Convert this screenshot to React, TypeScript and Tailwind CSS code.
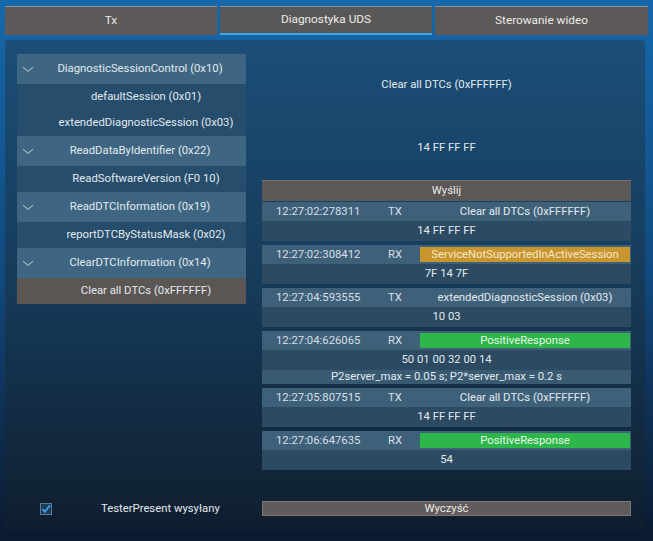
import React from "react";

const groups: { h: string; items: string[]; sel?: number }[] = [
  { h: "DiagnosticSessionControl (0x10)", items: ["defaultSession (0x01)", "extendedDiagnosticSession (0x03)"] },
  { h: "ReadDataByIdentifier (0x22)", items: ["ReadSoftwareVersion (F0 10)"] },
  { h: "ReadDTCInformation (0x19)", items: ["reportDTCByStatusMask (0x02)"] },
  { h: "ClearDTCInformation (0x14)", items: ["Clear all DTCs (0xFFFFFF)"], sel: 0 },
];

type Entry = { t: string; d: string; desc: string; kind?: "warn" | "ok"; hex: string; extra?: string };
const log: Entry[] = [
  { t: "12:27:02:278311", d: "TX", desc: "Clear all DTCs (0xFFFFFF)", hex: "14 FF FF FF" },
  { t: "12:27:02:308412", d: "RX", desc: "ServiceNotSupportedInActiveSession", kind: "warn", hex: "7F 14 7F" },
  { t: "12:27:04:593555", d: "TX", desc: "extendedDiagnosticSession (0x03)", hex: "10 03" },
  {
    t: "12:27:04:626065",
    d: "RX",
    desc: "PositiveResponse",
    kind: "ok",
    hex: "50 01 00 32 00 14",
    extra: "P2server_max = 0.05 s; P2*server_max = 0.2 s",
  },
  { t: "12:27:05:807515", d: "TX", desc: "Clear all DTCs (0xFFFFFF)", hex: "14 FF FF FF" },
  { t: "12:27:06:647635", d: "RX", desc: "PositiveResponse", kind: "ok", hex: "54" },
];

function Chevron() {
  return (
    <svg width="13" height="7" viewBox="0 0 13 7" className="block">
      <polyline points="1,1 6.5,5.5 12,1" fill="none" stroke="#a8bccb" strokeWidth="1.2" />
    </svg>
  );
}

export default function App() {
  return (
    <div className="w-[653px] h-[541px] overflow-hidden bg-gradient-to-b from-[#1668aa] via-[#114a80] to-[#0a1a30] font-['Roboto',sans-serif] text-[11.3px] text-[#e2e9ee] leading-none">
      {/* Tabs */}
      <div className="flex gap-[3px] pl-[5px] pr-[5px] pt-[6px]">
        <div className="w-[212px] h-[29px] bg-[#5c5958] border-t border-[#8e9196] flex items-center justify-center text-[11.8px] text-[#ecebea]">
          Tx
        </div>
        <div className="w-[212px] h-[29px] bg-[#5a5857] border-t border-[#8e9196] border-b-2 border-b-[#3ea6de] flex items-center justify-center text-[11.8px] text-[#ecebea]">
          Diagnostyka UDS
        </div>
        <div className="flex-1 h-[29px] bg-[#5c5958] border-t border-[#8e9196] flex items-center justify-center text-[11.8px] text-[#ecebea]">
          Sterowanie wideo
        </div>
      </div>

      {/* Panel */}
      <div className="mt-[5px] ml-[5px] w-[640px] h-[490px] rounded-[3px] bg-gradient-to-b from-[#1b4e78] via-[#163b5a] to-[#0f1e2f] flex flex-col">
        <div className="flex">
          {/* Left list */}
          <div className="ml-[12px] mt-[14px] w-[229px] flex flex-col">
            {groups.map((g) => (
              <React.Fragment key={g.h}>
                <div className="h-[30px] bg-[#3e6682] flex items-center">
                  <div className="w-[17px] pl-[5px] flex items-center justify-center shrink-0">
                    <Chevron />
                  </div>
                  <div className="flex-1 text-center">{g.h}</div>
                </div>
                {g.items.map((it, i) => (
                  <div
                    key={it}
                    className={
                      g.sel === i
                        ? "h-[26px] bg-[#5b5654] flex items-center justify-center pl-[29px]"
                        : "h-[26px] bg-[#264d6b] flex items-center justify-center pl-[29px]"
                    }
                  >
                    {it}
                  </div>
                ))}
              </React.Fragment>
            ))}
          </div>

          {/* Right column */}
          <div className="ml-[16px] w-[369px] flex flex-col">
            <div className="pt-[37px] h-[16px] box-content flex items-center justify-center">Clear all DTCs (0xFFFFFF)</div>
            <div className="mt-[47px] h-[16px] flex items-center justify-center">14 FF FF FF</div>
            <div className="mt-[24px] h-[21px] bg-[#5c5856] border-t border-[#77726f] flex items-center justify-center text-[#ece8e4]">
              Wyślij
            </div>
            <div className="mt-[1px] flex flex-col gap-[4px]">
              {log.map((e) => (
                <div key={e.t} className="flex flex-col">
                  <div className="h-[19px] bg-[#3f6079] flex items-center">
                    <div className="w-[126px] pl-[14px] shrink-0 text-[#d6dfe6]">{e.t}</div>
                    <div className="w-[32px] shrink-0 text-[#d6dfe6]">{e.d}</div>
                    <div
                      className={
                        e.kind === "warn"
                          ? "flex-1 mr-[1px] h-[15px] bg-[#c8952f] flex items-center justify-center text-[#f5e8c6]"
                          : e.kind === "ok"
                          ? "flex-1 mr-[1px] h-[15px] bg-[#2db64a] flex items-center justify-center text-[#e8f8e8]"
                          : "flex-1 mr-[1px] h-[15px] flex items-center justify-center"
                      }
                    >
                      {e.desc}
                    </div>
                  </div>
                  <div className="h-[20px] bg-[#2c4a61] flex items-center justify-center">{e.hex}</div>
                  {e.extra && (
                    <div className="h-[14px] bg-[#3a5a72] flex items-center justify-center">{e.extra}</div>
                  )}
                </div>
              ))}
            </div>
          </div>
        </div>

        {/* Bottom row */}
        <div className="mt-auto mb-[14px] flex items-center h-[15px]">
          <div className="w-[257px] flex items-center shrink-0">
            <div className="ml-[35px] w-[12px] h-[12px] border border-[#5a7a95] bg-[#1e3b58] flex items-center justify-center">
              <svg width="11" height="10" viewBox="0 0 11 10">
                <polyline points="1.5,5 4.2,8 9.8,1" fill="none" stroke="#3ea2e6" strokeWidth="2" />
              </svg>
            </div>
            <div className="ml-[49px] text-[#e2e9ee]">TesterPresent wysyłany</div>
          </div>
          <div className="w-[369px] h-[15px] bg-[#5f5c5b] border border-[#7a7776] flex items-center justify-center text-[#ece8e4]">
            Wyczyść
          </div>
        </div>
      </div>
    </div>
  );
}
